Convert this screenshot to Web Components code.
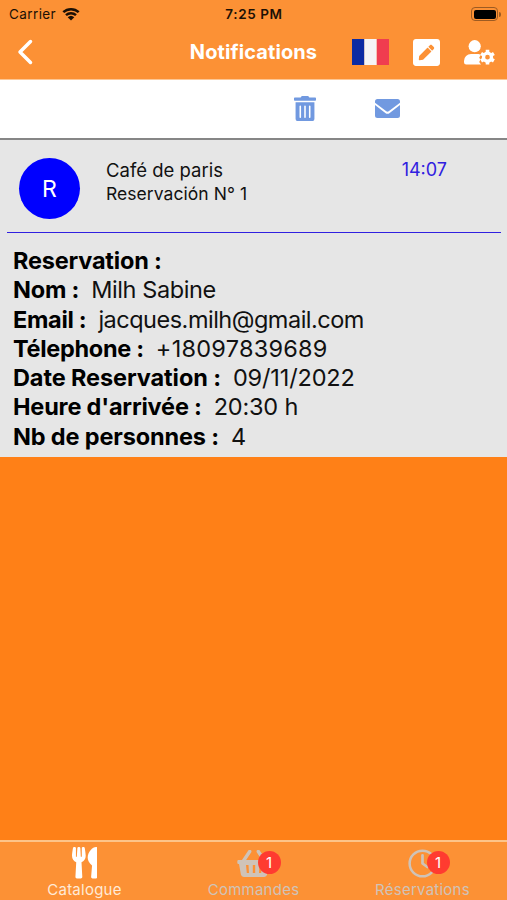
<!DOCTYPE html>
<html lang="fr">
<head>
<meta charset="utf-8">
<title>Notifications</title>
<style>
  html, body { margin: 0; height: 100%; }
  body { font-family: Inter, "Liberation Sans", sans-serif; color: #111; overflow: hidden; }
</style>
</head>
<body>
<app-screen>
  <status-bar slot="top"></status-bar>
  <nav-header slot="top">Notifications</nav-header>
  <action-bar slot="top"></action-bar>
  <notification-card initial="R" time="14:07">
    <span slot="title">Café de paris</span>
    <span slot="subtitle">Reservación N° 1</span>
    <detail-row label="Reservation :"></detail-row>
    <detail-row label="Nom :" style="--label-track: -.2px">Milh Sabine</detail-row>
    <detail-row label="Email :" style="--label-track: -.3px; --value-track: -.5px">jacques.milh@gmail.com</detail-row>
    <detail-row label="Télephone :" style="--label-track: -.3px; --value-track: .25px">+18097839689</detail-row>
    <detail-row label="Date Reservation :" style="--label-track: -.1px; --value-track: -.15px">09/11/2022</detail-row>
    <detail-row label="Heure d'arrivée :" style="--value-track: -.2px">20:30 h</detail-row>
    <detail-row label="Nb de personnes :" style="--label-track: -.15px">4</detail-row>
  </notification-card>
  <tab-bar slot="bottom">
    <tab-item icon="utensils" active>Catalogue</tab-item>
    <tab-item icon="basket" badge="1">Commandes</tab-item>
    <tab-item icon="clock" badge="1">Réservations</tab-item>
  </tab-bar>
</app-screen>

<script>
const ICONS = {
  back: ['0 0 16 26', '<path d="M13.5 2.5 3 13l10.500 10.500" fill="none" stroke="currentColor" stroke-width="3.500" stroke-linecap="round" stroke-linejoin="round"/>'],
  wifi: ['0 0 18 14', '<path d="M1.300 5.200a11.200 11.200 0 0 1 15.400 0M4 8.200a7.300 7.300 0 0 1 10 0" fill="none" stroke="currentColor" stroke-width="2.500"/><path d="M9 13.500 5.700 10.300a4.800 4.800 0 0 1 6.600 0z"/>'],
  flag: ['0 0 37 26', '<path fill="#0b2ba3" d="M0 0h12.500v26H0z"/><path fill="#f5f5f5" d="M12.300 0h12.500v26H12.300z"/><path fill="#f03d4f" d="M24.800 0H37v26H24.800z"/>'],
  edit: ['0 32 448 448', '<path d="M400 480H48c-26.500 0-48-21.500-48-48V80c0-26.500 21.500-48 48-48h352c26.500 0 48 21.500 48 48v352c0 26.500-21.500 48-48 48zM238.100 177.900L102.400 313.600l-6.300 57.100c-.8 7.600 5.600 14.100 13.300 13.300l57.100-6.300L302.200 242c2.300-2.300 2.300-6.100 0-8.500L246.700 178c-2.500-2.400-6.300-2.400-8.600-.1zM345 165.100L314.900 135c-9.400-9.400-24.600-9.400-33.900 0l-23.100 23.100c-2.300 2.300-2.300 6.100 0 8.500l55.500 55.500c2.300 2.300 6.100 2.300 8.500 0L345 199c9.300-9.300 9.300-24.500 0-33.900z"/>'],
  usercog: ['0 0 31 25', '<circle cx="10.700" cy="6.200" r="6.100"/><path d="M7 14h7.500l2.300.7-1.600 3 1.300 1.800-1.300 2.500 1.800 2.500H2.200A2.200 2.200 0 0 1 0 22.300V21a7 7 0 0 1 7-7z"/><circle cx="23.500" cy="17.200" r="4" fill="none" stroke="currentColor" stroke-width="3.300"/><path d="M23.500 9.800v3M23.500 21.600v3M17.100 13.500l2.600 1.500M27.300 19.400l2.600 1.500M29.900 13.500 27.300 15M19.700 19.400l-2.600 1.500" stroke="currentColor" stroke-width="3.600"/>'],
  trash: ['0 0 448 512', '<path d="M32 464a48 48 0 0 0 48 48h288a48 48 0 0 0 48-48V128H32zm272-256a16 16 0 0 1 32 0v224a16 16 0 0 1-32 0zm-96 0a16 16 0 0 1 32 0v224a16 16 0 0 1-32 0zm-96 0a16 16 0 0 1 32 0v224a16 16 0 0 1-32 0zM432 32H312l-9.400-18.700A24 24 0 0 0 281.100 0H166.800a23.720 23.720 0 0 0-21.400 13.300L136 32H16A16 16 0 0 0 0 48v32a16 16 0 0 0 16 16h416a16 16 0 0 0 16-16V48a16 16 0 0 0-16-16z"/>'],
  mail: ['0 0 25 19', '<path d="M2.500 0h20A2.500 2.500 0 0 1 25 2.500v1.300L13.700 12.300a2 2 0 0 1-2.400 0L0 3.800V2.500A2.500 2.500 0 0 1 2.500 0z"/><path d="M0 6.100 10.300 13.900a3.600 3.600 0 0 0 4.400 0L25 6.100v10.400a2.500 2.500 0 0 1-2.500 2.500h-20A2.500 2.500 0 0 1 0 16.500z"/>'],
  utensils: ['0 0 416 512', '<path d="M207.900 15.200c.8 4.700 16.100 94.500 16.100 128.800 0 52.300-27.800 89.600-68.900 104.600L168 486.700c.7 13.700-10.200 25.300-24 25.300H80c-13.700 0-24.700-11.500-24-25.300l12.900-238.100C27.700 233.600 0 196.200 0 144 0 109.600 15.300 19.900 16.100 15.200 19.300-5.100 61.400-5.400 64 16.300v141.200c1.300 3.400 15.100 3.200 16 0 1.400-25.300 7.900-139.200 8-141.800 3.300-20.800 44.700-20.800 47.900 0 .2 2.700 6.600 116.500 8 141.800.9 3.200 14.800 3.400 16 0V16.300c2.600-21.600 44.800-21.400 48-1.100zm119.200 285.700l-15 185.100c-1.200 14 9.900 26 23.900 26h56c13.300 0 24-10.700 24-24V24c0-13.200-10.700-24-24-24-82.500 0-221.400 178.500-64.900 300.900z"/>'],
  basket: ['0 0 34 27', '<path fill-rule="evenodd" d="M1.500 10h31a1.200 1.200 0 0 1 1.200 1.200v1.600a1.200 1.200 0 0 1-1.200 1.200H32l-1.900 10.500A3 3 0 0 1 27.200 27H6.800a3 3 0 0 1-2.900-2.500L2 14h-.5A1.200 1.200 0 0 1 .3 12.800v-1.600A1.200 1.200 0 0 1 1.500 10zM9 15l.8 8h2.200l-.5-8zm6.800 0v8h2.400v-8zm6.700 0-.5 8h2.200l.8-8z"/><path d="m6.700 10.500 6-9M27.300 10.500l-6-9" stroke="currentColor" stroke-width="3.400" stroke-linecap="round"/>'],
  clock: ['0 0 30 30', '<circle cx="15" cy="15" r="13.300" fill="none" stroke="currentColor" stroke-width="2.600"/><path d="M15 6.500V15l5 3.600" fill="none" stroke="currentColor" stroke-width="2.800" stroke-linecap="round" stroke-linejoin="round"/>']
};

function icon(name, width) {
  const [box, body] = ICONS[name];
  return `<svg class="${name}" width="${width}" viewBox="${box}" fill="currentColor" aria-hidden="true">${body}</svg>`;
}

class BaseElement extends HTMLElement {
  connectedCallback() {
    if (this.shadowRoot) return;
    this.attachShadow({ mode: 'open' });
    this.shadowRoot.innerHTML = `<style>* { box-sizing: border-box; } svg { display: block; flex: none; }</style>${this.template()}`;
  }
}

customElements.define('app-screen', class extends BaseElement {
  template() {
    return `
      <style>
        :host { display: flex; flex-direction: column; height: 100vh; background: #ff8017; }
        main { flex: 1; }
      </style>
      <slot name="top"></slot>
      <main><slot></slot></main>
      <slot name="bottom"></slot>`;
  }
});

customElements.define('status-bar', class extends BaseElement {
  template() {
    return `
      <style>
        :host { display: grid; grid-template-columns: 1fr auto 1fr; align-items: center; height: 27px; box-sizing: border-box; padding: 1px 6px 0 7px; background: #fc9135; color: #1b1005; font-size: 13.500px; }
        .left { display: flex; align-items: center; gap: 6px; padding-left: 2px; letter-spacing: .4px; }
        .time { font-weight: 600; font-size: 13.500px; letter-spacing: .6px; }
        .battery { justify-self: end; display: flex; align-items: center; gap: 1px; }
        .cell { width: 27px; height: 14px; padding: 1.500px; border: 1px solid #9d5b22; border-radius: 4px; }
        .cell i { display: block; height: 100%; border-radius: 2px; background: #000; }
        .tip { width: 2px; height: 5px; border-radius: 0 2px 2px 0; background: #9d5b22; }
      </style>
      <div class="left"><span>Carrier</span>${icon('wifi', 18)}</div>
      <span class="time">7:25 PM</span>
      <div class="battery"><div class="cell"><i></i></div><div class="tip"></div></div>`;
  }
});

customElements.define('nav-header', class extends BaseElement {
  template() {
    return `
      <style>
        :host { display: grid; grid-template-columns: minmax(0, 1fr) auto minmax(0, 1fr); align-items: center; height: 53px; box-sizing: border-box; padding: 0 12px 2px; background: #fc9135; border-bottom: 1px solid #fdc795; color: #fff; }
        .back { margin-left: 5px; }
        h1 { margin: 0; font-size: 20px; font-weight: 700; letter-spacing: .1px; }
        .tools { display: flex; align-items: center; justify-content: flex-end; gap: 24px; }
      </style>
      ${icon('back', 16)}
      <h1><slot></slot></h1>
      <div class="tools">${icon('flag', 37)}${icon('edit', 27)}${icon('usercog', 31)}</div>`;
  }
});

customElements.define('action-bar', class extends BaseElement {
  template() {
    return `
      <style>
        :host { display: flex; align-items: center; justify-content: flex-end; gap: 59px; height: 60px; box-sizing: border-box; padding: 0 107px 1px 0; background: #fff; border-bottom: 2px solid #868686; color: #7199e0; }
      </style>
      ${icon('trash', 22)}${icon('mail', 25)}`;
  }
});

customElements.define('notification-card', class extends BaseElement {
  template() {
    return `
      <style>
        :host { display: block; height: 317px; box-sizing: border-box; background: #e6e6e6; }
        header { display: flex; height: 93px; margin: 0 6px 0 7px; padding: 18px 54px 0 12px; border-bottom: 1px solid #3020e0; }
        .avatar { display: grid; place-items: center; width: 61px; height: 61px; margin-right: 26px; padding-top: 1px; border-radius: 50%; background: #00f; color: #fff; font-size: 23px; }
        .text { flex: 1; display: flex; flex-direction: column; padding-top: 1px; }
        .title { font-size: 18.500px; line-height: 23px; }
        .subtitle { font-size: 17.500px; line-height: 23px; letter-spacing: .05px; }
        time { font-size: 18px; line-height: 23px; color: #3020e0; }
        .body { padding: 13px 13px 0; }
      </style>
      <header>
        <div class="avatar">${this.getAttribute('initial')}</div>
        <div class="text">
          <div class="title"><slot name="title"></slot></div>
          <div class="subtitle"><slot name="subtitle"></slot></div>
        </div>
        <time>${this.getAttribute('time')}</time>
      </header>
      <div class="body"><slot></slot></div>`;
  }
});

customElements.define('detail-row', class extends BaseElement {
  template() {
    return `
      <style>
        :host { display: flex; gap: 12px; font-size: 23.500px; line-height: 29.300px; white-space: nowrap; }
        b { font-weight: 700; letter-spacing: var(--label-track, -.2px); color: #000; }
        span { letter-spacing: var(--value-track, -.4px); }
      </style>
      <b>${this.getAttribute('label')}</b><span><slot></slot></span>`;
  }
});

customElements.define('tab-bar', class extends BaseElement {
  template() {
    return `
      <style>
        :host { display: grid; grid-template-columns: repeat(3, 1fr); height: 60px; box-sizing: border-box; border-top: 2px solid #fdc489; background: #fc9135; }
      </style>
      <slot></slot>`;
  }
});

customElements.define('tab-item', class extends BaseElement {
  template() {
    const name = this.getAttribute('icon');
    const badge = this.getAttribute('badge');
    const widths = { utensils: 25.5, basket: 34, clock: 29 };
    return `
      <style>
        :host { display: flex; flex-direction: column; align-items: center; padding-top: 5px; color: #cfc3b8; }
        :host([active]) { color: #fff; }
        .icon { position: relative; display: grid; place-items: center; height: 33px; padding-bottom: 1px; }
        .badge { position: absolute; left: calc(50% + 4px); top: 4px; width: 23px; height: 23px; border-radius: 50%; background: #ff3b30; color: #fff; font-size: 15px; line-height: 23px; text-align: center; }
        .label { padding-top: 1px; font-size: 15px; line-height: 18px; letter-spacing: .25px; }
        :host([active]) .label { color: #ffead6; }
      </style>
      <div class="icon">${icon(name, widths[name])}${badge ? `<div class="badge">${badge}</div>` : ''}</div>
      <div class="label"><slot></slot></div>`;
  }
});
</script>
</body>
</html>
